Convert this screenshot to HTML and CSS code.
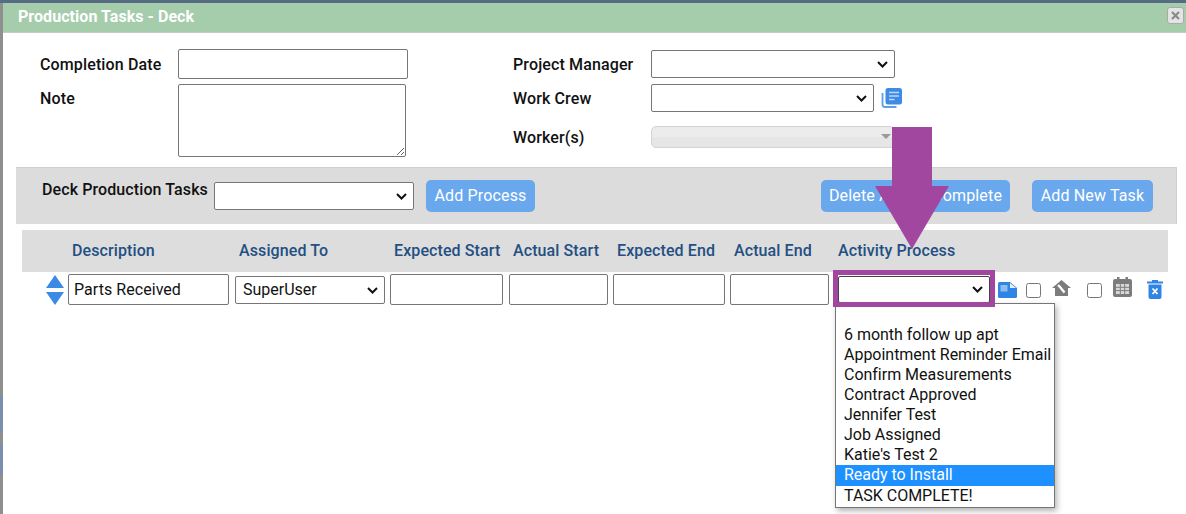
FILE: index.html
```html
<!DOCTYPE html>
<html lang="en">
<head>
<meta charset="utf-8">
<title>Production Tasks - Deck</title>
<link rel="stylesheet" href="styles.css">
</head>
<body>
<div class="topedge"></div>
<div class="shell">
  <div class="sideedge"></div>
  <main class="dialog">
    <header class="titlebar">
      <h1 class="title">Production Tasks - Deck</h1>
      <button class="close" type="button" aria-label="Close">
        <svg width="11" height="11" viewBox="0 0 11 11"><path d="M2 2 L9 9 M9 2 L2 9" stroke="#8a8a8a" stroke-width="2.2" fill="none"/></svg>
      </button>
    </header>
    <section class="form">
      <div class="col-left">
        <label class="lbl lbl-date">Completion Date</label>
        <input class="in-date" type="text">
        <label class="lbl lbl-note">Note</label>
        <textarea class="in-note"></textarea>
      </div>
      <div class="col-right">
        <label class="lbl">Project Manager</label>
        <select class="sel sel-pm"><option></option></select>
        <label class="lbl">Work Crew</label>
        <div class="crew">
          <select class="sel sel-crew"><option></option></select>
          <svg class="copy-icon" width="21" height="20" viewBox="0 0 21 20">
            <path d="M1.500 5 V16.500 Q1.500 19 4 19 H15.500" stroke="#5b9fe8" stroke-width="1.800" fill="none"/>
            <rect x="4.500" y="0" width="16.500" height="16.500" rx="2.500" fill="#3d8be6"/>
            <path d="M8 4.500 H18 M8 8 H18 M8 11.500 H13.500" stroke="#bcd8f8" stroke-width="1.500"/>
          </svg>
        </div>
        <label class="lbl lbl-workers">Worker(s)</label>
        <div class="multi"><span class="multi-arrow"></span></div>
      </div>
    </section>
    <section class="toolbar">
      <label class="lbl lbl-tasks">Deck Production Tasks</label>
      <select class="sel sel-tasks"><option></option></select>
      <button class="btn btn-add" type="button">Add Process</button>
      <button class="btn btn-del" type="button">Delete All Not Complete</button>
      <button class="btn btn-new" type="button">Add New Task</button>
    </section>
    <section class="table">
      <div class="tgrid thead">
        <span></span>
        <span class="th">Description</span>
        <span class="th">Assigned To</span>
        <span class="th">Expected Start</span>
        <span class="th">Actual Start</span>
        <span class="th">Expected End</span>
        <span class="th">Actual End</span>
        <span class="th">Activity Process</span>
      </div>
      <div class="tgrid trow">
        <span class="order">
          <svg width="18" height="30" viewBox="0 0 18 30"><path d="M9 0 L18 13 H0 Z M0 17 H18 L9 30 Z" fill="#3a8ae6"/></svg>
        </span>
        <input class="in-desc" type="text" value="Parts Received">
        <select class="sel sel-user"><option>SuperUser</option></select>
        <input class="in-es" type="text">
        <input class="in-as" type="text">
        <input class="in-ee" type="text">
        <input class="in-ae" type="text">
        <div class="actions">
          <select class="sel sel-activity"><option></option></select>
          <svg class="ic-note" width="19" height="16" viewBox="0 0 19 16"><path d="M1.500 0 H12 L19 6 V14.500 Q19 16 17.500 16 H1.500 Q0 16 0 14.500 V1.500 Q0 0 1.500 0 Z" fill="#2f84e4"/><path d="M2.500 3 H9.500 V9.500 H2.500 Z" fill="#8dbcf0"/><path d="M12 1 V6 H18 Z" fill="#e8f1fc"/></svg>
          <input class="chk chk-a" type="checkbox">
          <svg class="ic-house" width="19" height="16" viewBox="0 0 19 16"><path d="M9.500 0 L19 8 H16 V16 H3 V8 H0 Z" fill="#7c7c7c"/><path d="M6 5 L8 7 L12.500 12.500" stroke="#fff" stroke-width="2.400" fill="none"/></svg>
          <input class="chk chk-b" type="checkbox">
          <svg class="ic-cal" width="19" height="20" viewBox="0 0 19 20"><rect x="0" y="2" width="19" height="18" rx="2" fill="#7c7c7c"/><rect x="4" y="0" width="2.500" height="4" fill="#7c7c7c"/><rect x="12.500" y="0" width="2.500" height="4" fill="#7c7c7c"/><path d="M3 7 H16 V17 H3 Z" fill="#d9d9d9"/><path d="M3 10.300 H16 M3 13.600 H16 M7.300 7 V17 M11.700 7 V17" stroke="#7c7c7c" stroke-width="1"/></svg>
          <svg class="ic-trash" width="16" height="19" viewBox="0 0 16 19"><path d="M5 0 H11 V1.500 H16 V3.500 H0 V1.500 H5 Z" fill="#2f84e4"/><path d="M1.500 4.500 H14.500 V17 Q14.500 19 12.500 19 H3.500 Q1.500 19 1.500 17 Z" fill="#2f84e4"/><path d="M5.500 8.500 L10.500 14 M10.500 8.500 L5.500 14" stroke="#fff" stroke-width="1.800"/></svg>
        </div>
      </div>
    </section>
  </main>
</div>

<ul class="listbox">
  <li class="opt opt-blank">&nbsp;</li>
  <li class="opt">6 month follow up apt</li>
  <li class="opt">Appointment Reminder Email</li>
  <li class="opt">Confirm Measurements</li>
  <li class="opt">Contract Approved</li>
  <li class="opt">Jennifer Test</li>
  <li class="opt">Job Assigned</li>
  <li class="opt">Katie's Test 2</li>
  <li class="opt opt-active">Ready to Install</li>
  <li class="opt">TASK COMPLETE!</li>
</ul>
<div class="callout-box"></div>
<svg class="callout-arrow" width="74" height="122" viewBox="0 0 74 122"><path d="M17 0 H57 V59 H74 L37 122 L0 59 H17 Z" fill="#a2479f"/></svg>
</body>
</html>
```

FILE: styles.css
```css
* { box-sizing: border-box; }
html, body { margin: 0; padding: 0; height: 514px; overflow: hidden; background: #fff; }
body { font-family: Roboto, "Liberation Sans", sans-serif; font-size: 16px; color: #111; position: relative; }

.topedge { height: 3px; background: #566c83; }
.shell { display: flex; height: 511px; }
.sideedge {
  width: 3px;
  background: linear-gradient(to bottom, #8f8f8f 0, #8f8f8f 390px, #7a8fae 394px, #7a8fae 426px, #8f8f8f 430px, #8f8f8f 440px, #7a8fae 444px, #7a8fae 470px, #8f8f8f 474px);
}
.dialog { flex: 1; min-width: 0; background: #fff; }

.titlebar {
  height: 30px;
  background: #a5cdab;
  border-bottom: 1px solid #c9c9c9;
  display: flex;
  align-items: flex-start;
  justify-content: space-between;
  padding: 0 2px 0 15px;
}
.title { margin: 0; font-size: 16px; line-height: 28px; font-weight: 700; letter-spacing: 0.05px; color: #fff; }
.close {
  width: 17px; height: 17px; margin-top: 4px; padding: 0;
  display: flex; align-items: center; justify-content: center;
  background: #e4e4e4; border: 1px solid #aaa; border-radius: 3px;
}

.lbl { font-weight: 500; letter-spacing: 0.13px; color: #111; }

.form { display: flex; height: 134px; padding: 16px 0 0 37px; }
.col-left { width: 473px; display: grid; grid-template-columns: 138px 1fr; grid-auto-rows: min-content; row-gap: 5px; align-items: start; }
.lbl-date { line-height: 28px; padding-top: 2px; }
.lbl-note { line-height: 28px; padding-top: 1px; }
.col-right { display: grid; grid-template-columns: 138px 1fr; grid-auto-rows: min-content; padding-top: 1px; align-items: center; }
.col-right > :nth-child(n+3) { margin-top: 6px; }
.col-right > :nth-child(n+5) { margin-top: 14px; }

input[type=text], textarea {
  display: block; border: 1px solid #767676; border-radius: 2px; background: #fff;
  font: 16px Roboto, sans-serif; letter-spacing: 0.05px; color: #111; padding: 0 5px 1px; margin: 0;
}
.in-date { width: 230px; height: 30px; }
.in-note { width: 228px; height: 73px; resize: both; }

.sel {
  display: block; margin: 0; font: 16px Roboto, sans-serif; color: #111;
  appearance: none; -webkit-appearance: none;
  background: #fff url("data:image/svg+xml,%3Csvg xmlns='http://www.w3.org/2000/svg' width='11' height='7' viewBox='0 0 11 7'%3E%3Cpath d='M1 1 L5.500 5.500 L10 1' fill='none' stroke='%23111' stroke-width='2'/%3E%3C/svg%3E") no-repeat right 6px center;
  border: 1px solid #767676; border-radius: 2px;
  padding: 0 20px 2px 7px;
}
.sel-pm { width: 244px; height: 28px; }
.crew { display: flex; align-items: center; gap: 7px; }
.sel-crew { width: 223px; height: 28px; }
.copy-icon { display: block; }
.multi {
  width: 244px; height: 22px; position: relative;
  border: 1px solid #d3d3d3; border-radius: 5px;
  background: linear-gradient(to bottom, #ececec 0, #ececec 50%, #e6e6e6 50%, #e6e6e6 100%);
}
.multi-arrow { position: absolute; right: 3px; top: 7px; border: 5px solid transparent; border-top: 5px solid #999; border-bottom: 0; }

.toolbar {
  margin-left: 13px; width: 1161px; height: 57px;
  background: #dcdcdc;
  border-top: 1px solid #cfcfcf; border-right: 1px solid #cfcfcf;
  display: flex; align-items: flex-start;
  padding: 12px 23px 0 26px;
}
.lbl-tasks { width: 172px; line-height: 18px; margin-top: 1px; letter-spacing: 0.1px; }
.sel-tasks { width: 200px; height: 28px; margin-top: 2px; }
.btn {
  height: 32px; border: 0; border-radius: 5px; background: #6aa8ee; color: #fff;
  font: 16px Roboto, sans-serif; letter-spacing: 0.15px; padding: 0 0 2px; white-space: nowrap;
}
.btn-add { width: 109px; margin-left: 12px; }
.btn-del { width: 189px; margin-left: auto; }
.btn-new { width: 121px; margin-left: 22px; }

.table { margin: 6px 0 0 19px; width: 1146px; }
.tgrid { display: grid; grid-template-columns: 46px 167px 155px 119px 104px 117px 108px 1fr; }
.thead { height: 42px; padding-bottom: 2px; background: #dddddd; align-items: center; }
.th { padding-left: 4px; font-weight: 500; letter-spacing: 0.1px; color: #234f83; white-space: nowrap; }
.thead > :last-child { padding-left: 0; }
.trow { padding-top: 2px; align-items: start; }
.order { display: block; margin: 1px 0 0 24px; }
.order svg { display: block; }
.in-desc { width: 161px; height: 31px; }
.sel-user { width: 150px; height: 28px; margin-top: 2px; }
.in-es { width: 113px; height: 31px; }
.in-as { width: 99px; height: 31px; }
.in-ee { width: 112px; height: 31px; }
.in-ae { width: 99px; height: 31px; }

.actions { display: flex; align-items: flex-start; position: relative; }
.sel-activity { width: 152px; height: 27px; margin-top: 2px; border-color: #444; box-shadow: 0 3px 6px rgba(0,0,0,.2); }
.ic-note { display: block; margin: 8px 0 0 8px; }
.chk { width: 15px; height: 15px; margin: 9px 0 0 0; }
.chk-a { margin-left: 9px; }
.ic-house { display: block; margin: 6px 0 0 11px; }
.chk-b { margin-left: 16px; }
.ic-cal { display: block; margin: 3px 0 0 11px; }
.ic-trash { display: block; margin: 6px 0 0 15px; }

.listbox {
  position: absolute; left: 835px; top: 303px; width: 220px; height: 205px;
  margin: 0; padding: 0; list-style: none; background: #fff;
  border: 1px solid #767676; box-shadow: 2px 3px 6px rgba(0,0,0,.3);
  z-index: 2;
}
.opt { height: 20.1px; line-height: 20px; padding-left: 8px; white-space: nowrap; color: #111; letter-spacing: -0.02px; }
.opt-blank { height: 20.8px; }
.opt-active { background: #1e90ff; color: #fff; }

.callout-box { position: absolute; left: 833px; top: 270px; width: 162px; height: 37px; border: 5px solid #a2479f; z-index: 3; }
.callout-arrow { position: absolute; left: 875px; top: 127px; z-index: 4; display: block; }
```
